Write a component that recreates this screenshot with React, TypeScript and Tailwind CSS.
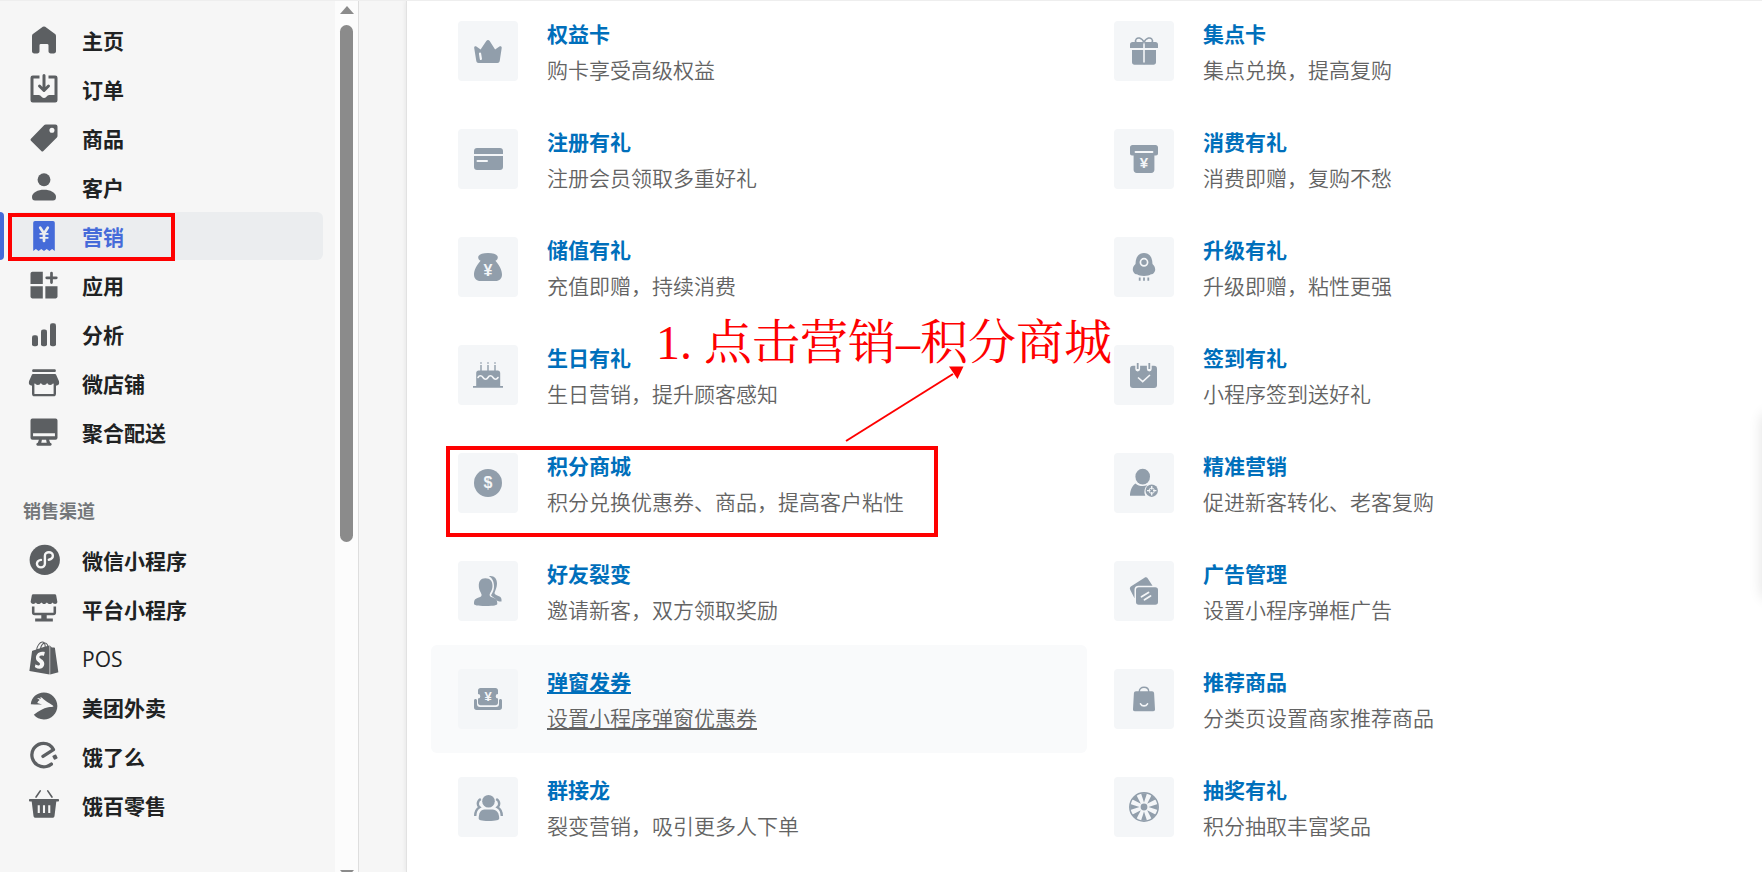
import type { ReactNode } from 'react';
import { FaShopify } from 'react-icons/fa';

type NavEntry = { label: string; icon: ReactNode; active?: boolean; latin?: boolean };
type Feature = {
  title: string;
  desc: string;
  icon: ReactNode;
  hovered?: boolean;
  marked?: boolean;
};

function NavSvg({ children }: { children: ReactNode }) {
  return (
    <svg viewBox="0 0 20 20" className="size-[30px] overflow-visible" fill="currentColor" aria-hidden="true">
      {children}
    </svg>
  );
}

function TileSvg({ children }: { children: ReactNode }) {
  return (
    <svg viewBox="0 0 30 30" className="size-[30px] overflow-visible" fill="currentColor" aria-hidden="true">
      {children}
    </svg>
  );
}

function Glyph({ x, y, size, children }: { x: number; y: number; size: number; children: string }) {
  return (
    <text x={x} y={y} fontSize={size} fontWeight="700" fontFamily="Liberation Sans, sans-serif" textAnchor="middle" fill="#f4f6f8">
      {children}
    </text>
  );
}

const mainNav: NavEntry[] = [
  {
    label: '主页',
    icon: (
      <NavSvg>
        <path d="M18 7.261V17.5c0 .841-.672 1.5-1.5 1.5h-2c-.828 0-1.5-.659-1.5-1.5V13.5a.9.9 0 0 0-.9-.9H7.9a.9.9 0 0 0-.9.9v3.977C7 18.318 6.328 19 5.5 19h-2c-.828 0-1.5-.682-1.5-1.523V7.261a1.5 1.5 0 0 1 .615-1.21l6.59-4.82a1.481 1.481 0 0 1 1.59 0l6.59 4.82A1.5 1.5 0 0 1 18 7.26z" />
      </NavSvg>
    ),
  },
  {
    label: '订单',
    icon: (
      <NavSvg>
        <path d="M11 1a1 1 0 1 0-2 0v7.586L7.707 7.293a1 1 0 0 0-1.414 1.414l3 3a1 1 0 0 0 1.414 0l3-3a1 1 0 0 0-1.414-1.414L11 8.586V1z" />
        <path d="M3 14V3h4V1H2.5A1.5 1.5 0 0 0 1 2.5v15A1.5 1.5 0 0 0 2.5 19h15a1.5 1.5 0 0 0 1.5-1.5v-15A1.5 1.5 0 0 0 17.5 1H13v2h4v11h-3.5c-.775 0-1.388.662-1.926 1.244l-.11.12A1.994 1.994 0 0 1 10 16a1.994 1.994 0 0 1-1.463-.637l-.111-.12C7.888 14.664 7.275 14 6.5 14H3z" />
      </NavSvg>
    ),
  },
  {
    label: '商品',
    icon: (
      <NavSvg>
        <path
          fillRule="evenodd"
          d="M10.2 1.4A1.4 1.4 0 0 1 11.2 1h6.4A1.4 1.4 0 0 1 19 2.4v6.2c0 .4-.15.75-.4 1l-9 9.1a1 1 0 0 1-1.4 0L1.3 11.9a1 1 0 0 1 0-1.4zM15.3 6.5a1.7 1.7 0 1 0 0-3.4 1.7 1.7 0 0 0 0 3.4z"
        />
      </NavSvg>
    ),
  },
  {
    label: '客户',
    icon: (
      <NavSvg>
        <circle cx="10" cy="5.2" r="4.3" />
        <path d="M2 16.6C2 13.6 6 11.8 10 11.8s8 1.8 8 4.8c0 1.5-.7 2.4-2 2.4H4c-1.3 0-2-.9-2-2.4z" />
      </NavSvg>
    ),
  },
  {
    label: '营销',
    active: true,
    icon: (
      <NavSvg>
        <path d="M2.8 1.2A1.2 1.2 0 0 1 4 0h12a1.2 1.2 0 0 1 1.2 1.2V20l-1.8-1.4-1.8 1.4-1.8-1.4-1.8 1.4-1.8-1.4L6.4 20l-1.8-1.4L2.8 20z" />
        <g stroke="#ebedef" strokeWidth="1.8" strokeLinecap="round" fill="none">
          <path d="M7.5 4.5L10 8.3l2.5-3.8M10 8.3v5" />
          <path d="M7.5 8.6h5M7.5 11.2h5" strokeWidth="1.2" />
        </g>
      </NavSvg>
    ),
  },
  {
    label: '应用',
    icon: (
      <NavSvg>
        <path d="M2.3 1.2h6.9v8.1H1V2.5c0-.7.6-1.3 1.3-1.3zM1 10.9h8.2V19H2.3C1.6 19 1 18.4 1 17.7zM10.9 10.9H19v6.8c0 .7-.6 1.3-1.3 1.3h-6.8z" />
        <path d="M15 2v6.4M11.8 5.2h6.4" stroke="currentColor" strokeWidth="1.8" strokeLinecap="round" />
      </NavSvg>
    ),
  },
  {
    label: '分析',
    icon: (
      <NavSvg>
        <rect x="2" y="10.9" width="4" height="7.3" rx="1.4" />
        <rect x="8" y="7" width="4" height="11.2" rx="1.4" />
        <rect x="14" y="2.9" width="4" height="15.3" rx="1.4" />
      </NavSvg>
    ),
  },
  {
    label: '微店铺',
    icon: (
      <NavSvg>
        <path d="M2.9.9h14.2c.5 0 .8.4.8.9s-.3.9-.8.9H2.9c-.5 0-.8-.4-.8-.9s.3-.9.8-.9z" />
        <path d="M2.6 4h14.8c.3 0 .5.1.6.4L20 8.8v.4a2 2 0 0 1-3.9 1 2.2 2.2 0 0 1-4-.2 2.3 2.3 0 0 1-4.2 0 2.2 2.2 0 0 1-4 .2A2 2 0 0 1 0 9.2v-.4l2-4.4c.1-.3.3-.4.6-.4z" />
        <path d="M2.8 11v6.2c0 .6.3.9.9.9h12.6c.6 0 .9-.3.9-.9V11" fill="none" stroke="currentColor" strokeWidth="1.6" />
      </NavSvg>
    ),
  },
  {
    label: '聚合配送',
    icon: (
      <NavSvg>
        <path
          fillRule="evenodd"
          d="M2.3 1h15.4A1.3 1.3 0 0 1 19 2.3v11.6a1.3 1.3 0 0 1-1.3 1.3h-4.3l.7 2c.8.2 1 .6 1 1 0 .5-.3.9-.8.9H5.7c-.5 0-.8-.4-.8-.9 0-.4.2-.8 1-1l.7-2H2.3A1.3 1.3 0 0 1 1 13.9V2.3A1.3 1.3 0 0 1 2.3 1zM2.7 10.8v2.1h14.6v-2.1zM8.600 15.2l-.4 2h3.6l-.4-2z"
        />
      </NavSvg>
    ),
  },
];

const channelNav: NavEntry[] = [
  {
    label: '微信小程序',
    icon: (
      <NavSvg>
        <circle cx="10.5" cy="9.9" r="10.1" />
        <path
          d="M8 9.9C6.3 10.2 5.3 11.3 5.3 12.5a2.65 2.4 0 0 0 5.3 0V7.2a2.65 2.4 0 0 1 5.3 0c0 1.3-1 2.3-2.7 2.6"
          fill="none"
          stroke="#f6f6f6"
          strokeWidth="1.6"
          strokeLinecap="round"
        />
      </NavSvg>
    ),
  },
  {
    label: '平台小程序',
    icon: (
      <NavSvg>
        <path d="M2.7.2h14.6c.4 0 .7.2.8.6l.8 4.4c0 .9-.7 1.5-1.5 1.5s-1.5-.5-1.8-1c-.4.7-1 1-1.8 1s-1.5-.4-1.9-1c-.4.6-1.1 1-1.8 1s-1.4-.4-1.8-1c-.4.6-1.1 1-1.9 1s-1.4-.3-1.8-1c-.3.5-1 1-1.8 1S1.1 6 1.1 5.200L1.900.8c.1-.4.4-.6.8-.6z" />
        <path d="M2.8 8.3v4c0 .7.3 1 1 1h12.400c.7 0 1-.3 1-1v-4" fill="none" stroke="currentColor" strokeWidth="1.7" />
        <path d="M8.2 14h3.6v2.400h4.1v2H4.1v-2h4.1z" />
      </NavSvg>
    ),
  },
  { label: 'POS', latin: true, icon: <FaShopify className="h-[34px] w-[30px]" aria-hidden="true" /> },
  {
    label: '美团外卖',
    icon: (
      <NavSvg>
        <path d="M1.2 8.2C1.6 3.7 5.3.4 9.9.4c5 0 9 4 9 8.9 0 5-4 9-9 9-2.7 0-5.1-1.2-6.7-3.100 3.500-2.600 6.200-4.300 9.600-5 1.600-.3 3-.1 3.500-.5.200-.5-1.800-1.700-4.600-3.400L9.500 4.600c-.5-.7-1.300-1.200-1.900-1.300l.3 1.400c-.9-.6-1.800-.8-2.500-.7l1.700 1.400c-.8.600-1.300 1.200-1.600 1.900l3.200 1c-2.500.3-5-.1-7.500-.1z" />
      </NavSvg>
    ),
  },
  {
    label: '饿了么',
    icon: (
      <NavSvg>
        <path
          d="M9.3 10.3l7-4.600C14.600 2.500 11.300 1.200 8 1.700a7.800 7.800 0 0 0-5.800 9.700c1.100 4.200 5.400 6.500 9.500 5.600 1.300-.3 2.200-.8 3.200-1.600"
          fill="none"
          stroke="currentColor"
          strokeWidth="2.2"
          strokeLinecap="round"
          strokeLinejoin="round"
        />
        <rect x="15.9" y="9.3" width="2.8" height="2.9" rx=".5" transform="rotate(-28 17.3 10.7)" />
      </NavSvg>
    ),
  },
  {
    label: '饿百零售',
    icon: (
      <NavSvg>
        <path
          fillRule="evenodd"
          d="M.5 6h19c.3 0 .5.2.5.5v.6c0 .3-.2.5-.5.5h-1.3l-1.2 9.7c-.1.8-.6 1.2-1.4 1.2H4.4c-.8 0-1.3-.4-1.4-1.200L1.800 7.600H.5c-.3 0-.5-.2-.5-.5v-.6C0 6.200.2 6 .5 6zM5.800 10.200v5.200h1.400v-5.200zM9.300 10.200v5.200h1.400v-5.200zM12.800 10.200v5.200h1.400v-5.200z"
        />
        <path d="M4.7 4.7L7.5.6M15.3 4.7L12.500.6" stroke="currentColor" strokeWidth="1.1" strokeLinecap="round" />
      </NavSvg>
    ),
  },
];

const wheelAngles = [0, 45, 90, 135, 180, 225, 270, 315];

const features: Feature[] = [
  {
    title: '权益卡',
    desc: '购卡享受高级权益',
    icon: (
      <TileSvg>
        <path d="M1.2 12c-.2-1.5 1-2.2 2.2-1.500l4.200 2.900L13.300 5c.9-1.400 2.500-1.400 3.400 0l5.400 8.400 4.300-2.900c1.200-.7 2.500 0 2.300 1.500l-2 13c-.2 1.300-1 2-2.300 2H5.600c-1.300 0-2.100-.7-2.300-2z" />
        <path d="M7 17.5l.9 5.5" stroke="#f4f6f8" strokeWidth="2.2" strokeLinecap="round" />
      </TileSvg>
    ),
  },
  {
    title: '集点卡',
    desc: '集点兑换，提高复购',
    icon: (
      <TileSvg>
        <path d="M3.5 6h10.700v6H1V8.500C1 7 2 6 3.500 6zM15.800 6h10.700C28 6 29 7 29 8.500V12H15.800zM3 14h11.200v14.700H5.500C4 28.700 3 27.700 3 26.200zM15.800 14H27v12.200c0 1.500-1 2.500-2.500 2.500h-8.700z" />
        <path d="M14 26.5h2v2.2h-2z" />
        <path d="M7 6.500C5.500 3.500 8 1.500 10.500 2 12.500 2.500 14 4 15 6.500 16 4 17.500 2.500 19.500 2 22 1.500 24.500 3.500 23 6.500" fill="none" stroke="currentColor" strokeWidth="1.5" />
      </TileSvg>
    ),
  },
  {
    title: '注册有礼',
    desc: '注册会员领取多重好礼',
    icon: (
      <TileSvg>
        <path d="M4 4h23c1.800 0 3 1.200 3 3v3H1V7c0-1.800 1.200-3 3-3zM1 12h29v11c0 1.800-1.200 3-3 3H4c-1.800 0-3-1.200-3-3z" />
        <path d="M4.500 17h9.500" stroke="#f4f6f8" strokeWidth="2" strokeLinecap="round" />
      </TileSvg>
    ),
  },
  {
    title: '消费有礼',
    desc: '消费即赠，复购不愁',
    icon: (
      <TileSvg>
        <path d="M3.500 1h23C28 1 29 2 29 3.500v6c0 1.200-.8 2-2 2h-1.600v14.300c0 2-1.200 3.200-3.200 3.200H7.800c-2 0-3.200-1.200-3.200-3.200V11.500H3c-1.200 0-2-.8-2-2v-6C1 2 2 1 3.500 1z" />
        <path d="M6.500 8h17" stroke="#f4f6f8" strokeWidth="1.8" strokeLinecap="round" />
        <Glyph x={15} y={24} size={15}>¥</Glyph>
      </TileSvg>
    ),
  },
  {
    title: '储值有礼',
    desc: '充值即赠，持续消费',
    icon: (
      <TileSvg>
        <path d="M15 1c6 0 9.800 1.700 9.800 4.400 0 1.500-1 2.600-2.400 3.300C26.500 13 29 18.500 29 22.500c0 4-2.500 6.500-6.500 6.500h-15C3.500 29 1 26.500 1 22.500c0-4 2.500-9.500 6.600-13.800C6.200 8 5.200 6.900 5.200 5.400 5.200 2.700 9 1 15 1z" />
        <Glyph x={15} y={24} size={16}>¥</Glyph>
      </TileSvg>
    ),
  },
  {
    title: '升级有礼',
    desc: '升级即赠，粘性更强',
    icon: (
      <TileSvg>
        <path d="M15 1c5.500 0 8.500 4.500 8.500 11 1.700 1.500 2.700 3.500 2.700 5.500 0 2.500-1.800 4.800-4.200 4.800-1.500 1.200-3.700 1.700-7 1.700s-5.500-.5-7-1.700c-2.400 0-4.200-2.300-4.200-4.800 0-2 1-4 2.700-5.500C6.500 5.500 9.500 1 15 1z" />
        <circle cx="15" cy="10.300" r="3.600" fill="none" stroke="#f4f6f8" strokeWidth="1.700" />
        <path d="M10.700 25.500v3.300M15 25.500v3.300M19.300 25.500v3.300" stroke="currentColor" strokeWidth="1.800" />
      </TileSvg>
    ),
  },
  {
    title: '生日有礼',
    desc: '生日营销，提升顾客感知',
    icon: (
      <TileSvg>
        <path d="M3.200 13c0-1.500 1-2.500 2.500-2.500h19c1.500 0 2.500 1 2.500 2.500v13H30v1.700H0V26h3.200z" />
        <path d="M8 5v6M15 5v6M22 5v6" stroke="currentColor" strokeWidth="1.400" />
        <path d="M8 2.300v1.500M15 2.300v1.500M22 2.300v1.500" stroke="currentColor" strokeWidth="1.400" />
        <path d="M5 17.500c1.300-2.300 3.500-2.300 5 0s3.700 2.300 5 0 3.500-2.300 5 0 3.700 2.300 5 0" fill="none" stroke="#f4f6f8" strokeWidth="1.600" strokeLinecap="round" />
      </TileSvg>
    ),
  },
  {
    title: '签到有礼',
    desc: '小程序签到送好礼',
    icon: (
      <TileSvg>
        <rect x="1" y="5.700" width="27" height="22.300" rx="3" />
        <path d="M8.700 4v5M20.300 4v5" stroke="#f4f6f8" strokeWidth="4.800" strokeLinecap="round" />
        <path d="M8.700 3v6M20.300 3v6" stroke="currentColor" strokeWidth="1.800" />
        <path d="M9 17.500l4.700 4.200 7.300-6.700" fill="none" stroke="#f4f6f8" strokeWidth="1.600" />
      </TileSvg>
    ),
  },
  {
    title: '积分商城',
    desc: '积分兑换优惠券、商品，提高客户粘性',
    marked: true,
    icon: (
      <TileSvg>
        <circle cx="15" cy="15" r="14" />
        <Glyph x={15} y={20} size={16}>$</Glyph>
      </TileSvg>
    ),
  },
  {
    title: '精准营销',
    desc: '促进新客转化、老客复购',
    icon: (
      <TileSvg>
        <ellipse cx="13.700" cy="8.700" rx="7.300" ry="7.900" />
        <path d="M6.500 15.500c2 1.800 4.500 2.600 7.200 2.600 1.700 0 3.300-.3 4.600-1-2.600 2.400-3.800 6.700-2 10.600H1C1 23 2.800 18 6.500 15.500z" />
        <circle cx="22.700" cy="22.700" r="6.200" />
        <circle cx="22.700" cy="22.700" r="2.700" fill="none" stroke="#f4f6f8" strokeWidth=".9" />
        <path d="M22.700 18v3.400M22.700 24v3.400M18 22.700h3.400M24 22.700h3.400" stroke="#f4f6f8" strokeWidth="1.300" />
      </TileSvg>
    ),
  },
  {
    title: '好友裂变',
    desc: '邀请新客，双方领取奖励',
    icon: (
      <TileSvg>
        <path d="M16 .2c5-.8 8 2.300 8 7.500 0 4-2 7-2.500 9.300 0 1.500 2 2.300 4.500 3.300 2.300.9 2.800 2.700 2.500 5.200-1.500 0-3.200-.2-4.700-1.100-1-2.400-4.600-3.200-5.800-5.200 1.900-3 3-5.200 3-9C21 5 19 2 16 .2z" />
        <path d="M12.300 2.200c5.200 0 7.200 3.300 7.200 7.500 0 4.300-2 6.300-2.800 8.500-.4 1.500.5 2.500 3 3.400 3.500 1.300 4.600 2 4.600 6.400 0 1-3 2-11.600 2S1 29 1 28c0-4.400 1.200-5.100 4.700-6.400 2.500-.9 3.200-1.900 2.800-3.400C7.800 16 5.800 14 5.800 9.700c0-4.200 1.700-7.500 6.500-7.500z" />
      </TileSvg>
    ),
  },
  {
    title: '广告管理',
    desc: '设置小程序弹框广告',
    icon: (
      <TileSvg>
        <path d="M1.800 10.500L15.500 1.700c1.200-.8 2.600-.5 3.300.7l4.700 7.400H9.500c-2.500 0-4 1.500-4 4v8.500L1.300 14c-.7-1.300-.5-2.800.5-3.500z" />
        <rect x="7" y="11.300" width="22" height="17.500" rx="2.800" />
        <path d="M12.500 20.700l7-4.200M15.500 23.700l6-3.700" stroke="#f4f6f8" strokeWidth="1.800" strokeLinecap="round" />
      </TileSvg>
    ),
  },
  {
    title: '弹窗发券',
    desc: '设置小程序弹窗优惠券',
    hovered: true,
    icon: (
      <TileSvg>
        <path d="M2.500 15c.9 0 1.500.6 1.500 1.500V20c0 2 1 3 3 3h16c2 0 3-1 3-3v-3.500c0-.9.6-1.500 1.500-1.500S29 15.600 29 16.500v6.800c0 1.700-1 2.700-2.700 2.700H3.700C2 26 1 25 1 23.300v-6.800C1 15.600 1.600 15 2.500 15z" />
        <path d="M7.500 4h15C24 4 25 5 25 6.500V10a2.300 2.300 0 0 0 0 4.600v4.200c0 1.500-1 2.500-2.500 2.500h-15C6 21.300 5 20.300 5 18.800v-4.200A2.300 2.300 0 0 0 5 10V6.500C5 5 6 4 7.500 4z" />
        <Glyph x={15} y={17} size={13}>¥</Glyph>
      </TileSvg>
    ),
  },
  {
    title: '推荐商品',
    desc: '分类页设置商家推荐商品',
    icon: (
      <TileSvg>
        <path d="M7 7.300h16c1.200 0 2 .8 2.100 2l.9 16c.1 1.200-.6 2-1.800 2H5.800c-1.200 0-1.900-.8-1.800-2l.9-16c.1-1.200.9-2 2.100-2z" />
        <path d="M10.300 9V7.500C10.300 5 12 3.300 15 3.300s4.700 1.700 4.700 4.200V9" fill="none" stroke="currentColor" strokeWidth="1.400" />
        <path d="M11.500 19.800c1.500 2.800 5.500 2.800 7 0" fill="none" stroke="#f4f6f8" strokeWidth="1.600" strokeLinecap="round" />
      </TileSvg>
    ),
  },
  {
    title: '群接龙',
    desc: '裂变营销，吸引更多人下单',
    icon: (
      <TileSvg>
        <circle cx="15.500" cy="9.300" r="6.300" />
        <path d="M11.500 17.500h8c4.200 0 6.700 3.800 6.700 9 0 1.500-3 2.500-10.700 2.500S5.700 28 5.700 26.500c0-5.200 1.800-9 5.800-9z" />
        <path d="M7.800 7C6 8 4.800 9.700 4.800 11.700c0 1.500.7 2.800 1.700 3.600-2.500 1.500-4.300 4.500-4.300 8.700M23.200 7c1.800 1 3 2.700 3 4.700 0 1.500-.7 2.800-1.700 3.600 2.500 1.500 4.300 4.500 4.300 8.700" fill="none" stroke="currentColor" strokeWidth="2.400" />
      </TileSvg>
    ),
  },
  {
    title: '抽奖有礼',
    desc: '积分抽取丰富奖品',
    icon: (
      <TileSvg>
        <circle cx="15" cy="15" r="14.200" fill="none" stroke="currentColor" strokeWidth="1.500" />
        <circle cx="15" cy="15" r="3.400" />
        {wheelAngles.map((a) => (
          <path key={a} d="M15 10.500L12 1.200h6z" transform={`rotate(${a} 15 15)`} />
        ))}
      </TileSvg>
    ),
  },
];

function NavRow({ entry }: { entry: NavEntry }) {
  return (
    <li className="relative px-3">
      {entry.active && <span className="absolute inset-y-0 left-0 w-1 rounded-r bg-[#456bd9]" />}
      <a
        href="#"
        aria-current={entry.active ? 'page' : undefined}
        className={`flex h-12 items-center rounded-md pl-[17px] ${entry.active ? 'bg-[#ebedef] text-[#456bd9]' : 'text-[#5c5f62]'}`}
      >
        <span className="flex w-[30px] justify-center">{entry.icon}</span>
        <span
          className={`ml-[23px] pt-0.5 text-[21px] leading-7 ${entry.latin ? 'font-medium' : 'font-bold'} ${entry.active ? 'text-[#456bd9]' : 'text-[#202223]'}`}
        >
          {entry.label}
        </span>
      </a>
      {entry.active && <span className="absolute top-px left-2 h-12 w-[167px] border-4 border-[#fe0000]" />}
    </li>
  );
}

function FeatureCard({ feature }: { feature: Feature }) {
  const line = feature.hovered ? 'underline' : '';
  return (
    <a href="#" className={`relative flex h-[108px] rounded-md py-6 pl-[27px] ${feature.hovered ? 'bg-[#f9fafb]' : ''}`}>
      <span className="flex size-[60px] shrink-0 items-center justify-center rounded bg-[#f4f6f8] text-[#919eab]">
        {feature.icon}
      </span>
      <span className="-mt-px ml-[29px] flex flex-col">
        <span className={`text-[21px] leading-7 font-bold text-[#006fbb] ${line}`}>{feature.title}</span>
        <span className={`mt-2 text-[21px] leading-7 font-[350] text-[#636363] ${line}`}>{feature.desc}</span>
      </span>
      {feature.marked && <span className="absolute top-[17px] left-[15px] h-[91px] w-[492px] border-4 border-[#fe0000]" />}
    </a>
  );
}

export default function App() {
  return (
    <div className="relative flex h-screen overflow-hidden border-t border-[#eeeeee] bg-[#f6f6f6] font-['Open_Sans','Noto_Sans_CJK_SC',sans-serif]">
      <aside className="flex w-[359px] shrink-0 border-r border-[#dedede]">
        <nav className="flex-1 pt-[15px]" aria-label="主导航">
          <ul className="flex flex-col gap-px">
            {mainNav.map((e) => (
              <NavRow key={e.label} entry={e} />
            ))}
          </ul>
          <h2 className="mt-10 mb-3 pt-0.5 pl-[23px] text-lg leading-[26px] font-bold text-[#74777a]">销售渠道</h2>
          <ul className="flex flex-col gap-px">
            {channelNav.map((e) => (
              <NavRow key={e.label} entry={e} />
            ))}
          </ul>
        </nav>
        <div className="flex w-[23px] flex-col items-center bg-[#fcfcfc] pt-[5px]" aria-hidden="true">
          <svg viewBox="0 0 14 8" className="h-2 w-3.5 fill-[#8b8b8b]">
            <path d="M7 0l7 8H0z" />
          </svg>
          <div className="my-[11px] w-[13px] flex-1">
            <div className="h-[62%] rounded-full bg-[#8b8b8b]" />
          </div>
          <svg viewBox="0 0 14 8" className="-mb-1.5 h-2 w-3.5 fill-[#8b8b8b]">
            <path d="M0 0h14L7 8z" />
          </svg>
        </div>
      </aside>

      <main className="flex-1 pl-[47px]">
        <section className="relative flow-root min-h-full border-l border-[#e2e2e2] bg-white pr-[19px] pl-6 shadow-[-1px_0_4px_rgba(0,0,0,0.06)]">
          <div className="-mt-1 grid grid-cols-2">
            {features.map((f) => (
              <FeatureCard key={f.title} feature={f} />
            ))}
          </div>

          <p className="absolute top-[306px] left-[249px] text-5xl leading-[72px] whitespace-pre text-[#fe0000] font-['Liberation_Serif','Noto_Serif_CJK_SC','Noto_Sans_CJK_SC',serif]">
            1. 点击营销–积分商城
          </p>
          <svg
            viewBox="0 0 120 78"
            className="absolute top-[364px] left-[438px] h-[78px] w-[120px] fill-[#fe0000] stroke-[#fe0000]"
            aria-hidden="true"
          >
            <path d="M1 76L108 9" strokeWidth="2" />
            <path d="M104 1.500h14.500L112.500 14z" stroke="none" />
          </svg>
        </section>
      </main>

      <div className="absolute top-[412px] left-full h-[186px] w-10 rounded-lg shadow-[0_0_14px_rgba(0,0,0,0.12)]" aria-hidden="true" />
    </div>
  );
}
